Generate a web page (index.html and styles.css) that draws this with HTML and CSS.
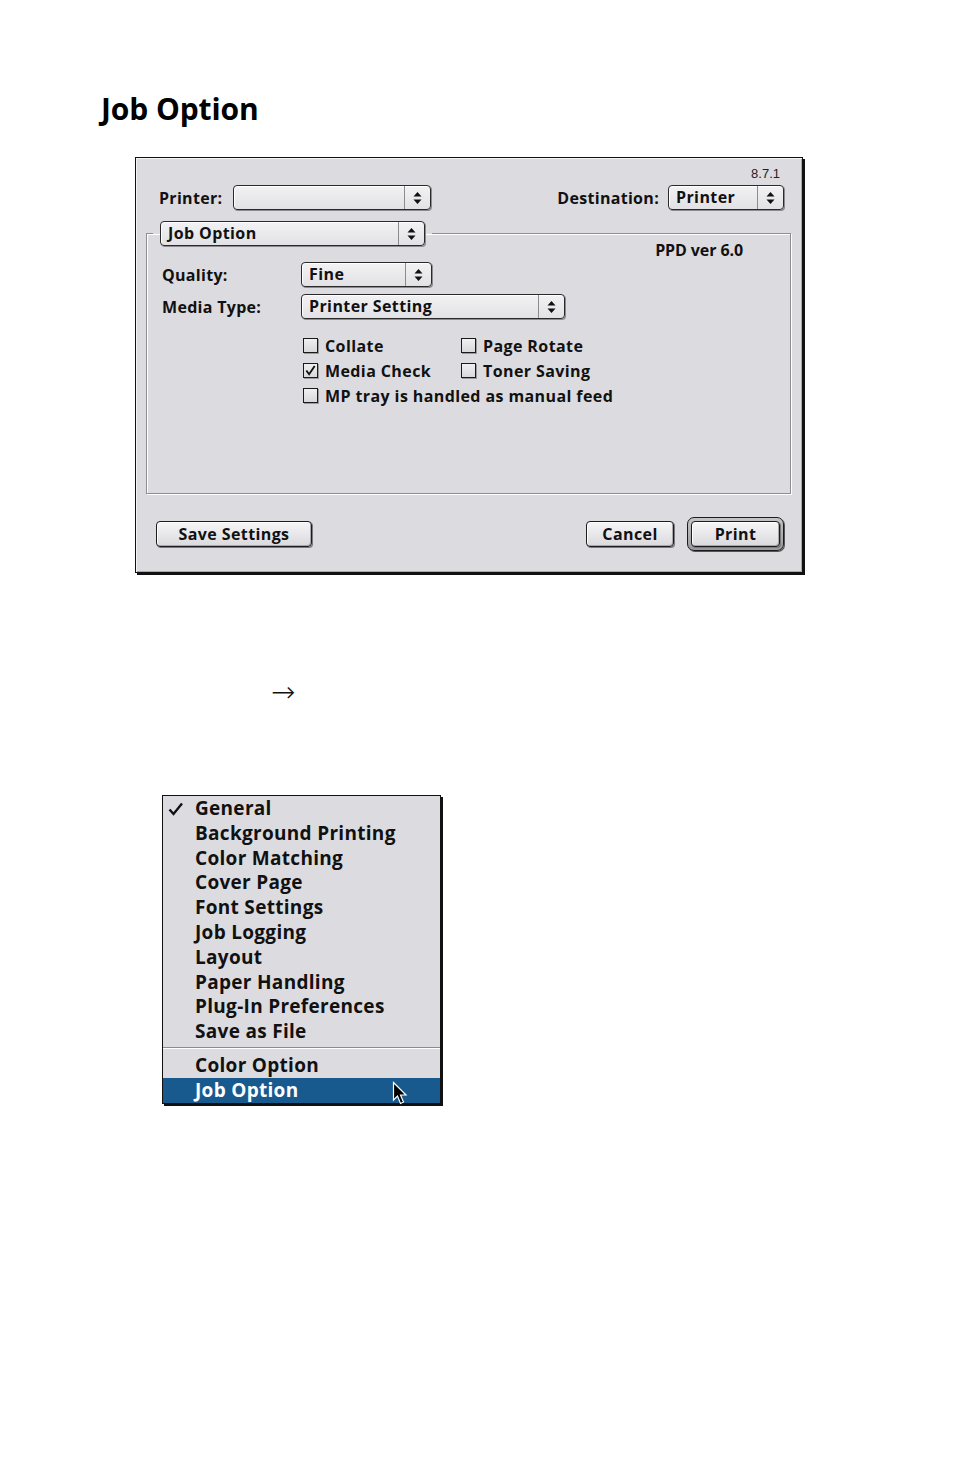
FILE: index.html
```html
<!DOCTYPE html>
<html>
<head>
<meta charset="utf-8">
<link rel="stylesheet" href="styles.css">
</head>
<body>
<h1 class="title">Job Option</h1>

<div class="dialog">
  <div class="version">8.7.1</div>
  <div class="top-row">
    <div class="field">
      <span class="label label-printer">Printer:</span>
      <div class="popup w-printer"><span class="popup-text"></span><span class="popup-arrow"><svg width="9" height="14" viewBox="0 0 9 14"><path d="M4.5 1 L8.5 5.5 L0.5 5.5 Z M4.5 13 L8.5 8.5 L0.5 8.5 Z" fill="#111"/></svg></span></div>
    </div>
    <div class="field">
      <span class="label">Destination:</span>
      <div class="popup w-dest"><span class="popup-text">Printer</span><span class="popup-arrow"><svg width="9" height="14" viewBox="0 0 9 14"><path d="M4.5 1 L8.5 5.5 L0.5 5.5 Z M4.5 13 L8.5 8.5 L0.5 8.5 Z" fill="#111"/></svg></span></div>
    </div>
  </div>

  <fieldset class="group">
    <legend class="group-legend">
      <div class="popup w-panel"><span class="popup-text">Job Option</span><span class="popup-arrow"><svg width="9" height="14" viewBox="0 0 9 14"><path d="M4.5 1 L8.5 5.5 L0.5 5.5 Z M4.5 13 L8.5 8.5 L0.5 8.5 Z" fill="#111"/></svg></span></div>
    </legend>
    <div class="group-body">
      <div class="ppd">PPD ver 6.0</div>
      <div class="opt-row">
        <span class="opt-label">Quality:</span>
        <div class="popup w-quality"><span class="popup-text">Fine</span><span class="popup-arrow"><svg width="9" height="14" viewBox="0 0 9 14"><path d="M4.5 1 L8.5 5.5 L0.5 5.5 Z M4.5 13 L8.5 8.5 L0.5 8.5 Z" fill="#111"/></svg></span></div>
      </div>
      <div class="opt-row second">
        <span class="opt-label">Media Type:</span>
        <div class="popup w-media"><span class="popup-text">Printer Setting</span><span class="popup-arrow"><svg width="9" height="14" viewBox="0 0 9 14"><path d="M4.5 1 L8.5 5.5 L0.5 5.5 Z M4.5 13 L8.5 8.5 L0.5 8.5 Z" fill="#111"/></svg></span></div>
      </div>
      <div class="checks">
        <div class="check-grid">
          <label class="check"><span class="box"></span>Collate</label>
          <label class="check"><span class="box"></span>Page Rotate</label>
          <label class="check"><span class="box"><svg width="14" height="14" viewBox="0 0 14 14"><path d="M2.5 6.5 L5.5 10.5 L11.5 1.5" fill="none" stroke="#111" stroke-width="2"/></svg></span>Media Check</label>
          <label class="check"><span class="box"></span>Toner Saving</label>
        </div>
        <label class="check"><span class="box"></span>MP tray is handled as manual feed</label>
      </div>
    </div>
  </fieldset>

  <div class="button-row">
    <div class="btn w-save">Save Settings</div>
    <div class="btn-group">
      <div class="btn w-cancel">Cancel</div>
      <div class="default-ring"><div class="btn w-print">Print</div></div>
    </div>
  </div>
</div>

<div class="arrow">&rarr;</div>

<div class="menu">
  <div class="menu-item"><svg class="mark" width="16" height="14" viewBox="0 0 16 14"><path d="M1.5 7.5 L5.5 12 L14 1.5" fill="none" stroke="#111" stroke-width="2.4"/></svg>General</div>
  <div class="menu-item">Background Printing</div>
  <div class="menu-item">Color Matching</div>
  <div class="menu-item">Cover Page</div>
  <div class="menu-item">Font Settings</div>
  <div class="menu-item">Job Logging</div>
  <div class="menu-item">Layout</div>
  <div class="menu-item">Paper Handling</div>
  <div class="menu-item">Plug-In Preferences</div>
  <div class="menu-item">Save as File</div>
  <div class="menu-sep"></div>
  <div class="menu-item tall">Color Option</div>
  <div class="menu-item tall selected">Job Option
    <svg class="cursor" width="18" height="26" viewBox="0 0 18 26"><path d="M1.5 1.5 L1.5 19 L5.5 15 L8.5 22.5 L11.5 21 L8.5 14 L14 14 Z" fill="#000" stroke="#fff" stroke-width="1.2" stroke-linejoin="miter"/></svg>
  </div>
</div>
</body>
</html>
```

FILE: styles.css
```css
html, body {
  margin: 0;
  padding: 0;
  background: #ffffff;
}

body {
  width: 954px;
  height: 1475px;
  font-family: "Open Sans", "DejaVu Sans", sans-serif;
  color: #111;
}

.title {
  margin: 0;
  padding: 89px 0 0 101px;
  height: 40px;
  font-family: "Open Sans", "DejaVu Sans", sans-serif;
  font-weight: 700;
  font-size: 30px;
  line-height: 40px;
  color: #000;
  letter-spacing: -0.1px;
}

/* ---------- dialog ---------- */
.dialog {
  margin: 28px 0 0 135px;
  width: 645px;
  padding: 9px 11px 21px 10px;
  background: #dcdce0;
  border: 1px solid #111;
  box-shadow: 2px 2px 0 #111, inset 1px 1px 0 #f4f4f6, inset -1px -1px 0 #a8a8ac;
  font-family: "Open Sans", "DejaVu Sans", sans-serif;
}

.version {
  height: 14px;
  line-height: 14px;
  font-family: "Liberation Sans", Arial, sans-serif;
  font-size: 13px;
  text-align: right;
  padding-right: 11px;
  color: #222;
}

.top-row {
  margin-top: 4px;
  height: 25px;
  display: flex;
  justify-content: space-between;
  padding: 0 7px 0 13px;
}

.field {
  display: flex;
  align-items: center;
}

.label {
  font-weight: 700;
  font-size: 16px;
  margin-right: 9px;
  letter-spacing: 0.3px;
}

.label-printer {
  width: 65px;
  margin-right: 9px;
}

/* popup (pull-down menu button) */
.popup {
  display: flex;
  height: 23px;
  border: 1px solid #2a2a2a;
  border-radius: 4px;
  background: linear-gradient(#f2f2f4, #e2e2e6);
  box-shadow: 1px 1px 0 #8c8c90, inset 1px 1px 0 #ffffff;
  box-sizing: content-box;
}

.popup-text {
  flex: 1;
  padding-left: 7px;
  font-weight: 700;
  font-size: 16px;
  line-height: 23px;
  white-space: nowrap;
  letter-spacing: 0.4px;
}

.popup-arrow {
  width: 25px;
  border-left: 1px solid #8c8c90;
  display: flex;
  align-items: center;
  justify-content: center;
}

.w-printer { width: 196px; }
.w-dest { width: 114px; }
.w-panel { width: 263px; }
.w-quality { width: 129px; }
.w-media { width: 262px; }

/* group box */
.group {
  margin: 11px 0 0 0;
  padding: 0 0 0 6px;
  border: 1px solid #8e8e92;
  box-shadow: 1px 1px 0 #ffffff, inset 1px 1px 0 #ffffff;
  min-width: 0;
}

.group-legend {
  padding: 0 7px;
  margin: 0;
}

.group-body {
  height: 251px;
  padding-left: 9px;
}

.ppd {
  margin-top: -4px;
  height: 16px;
  line-height: 16px;
  text-align: right;
  padding-right: 47px;
  font-weight: 700;
  font-size: 16px;
  letter-spacing: -0.1px;
}

.opt-row {
  margin-top: 4px;
  height: 25px;
  display: flex;
  align-items: center;
}

.opt-row.second {
  margin-top: 7px;
}

.opt-label {
  width: 139px;
  font-weight: 700;
  font-size: 16px;
  letter-spacing: 0.3px;
}

.checks {
  margin-top: 14px;
  padding-left: 141px;
  display: flex;
  flex-direction: column;
}

.check-grid {
  display: grid;
  grid-template-columns: 158px auto;
}

.check {
  height: 25px;
  display: flex;
  align-items: center;
  font-weight: 700;
  font-size: 16px;
  letter-spacing: 0.4px;
  white-space: nowrap;
}

.box {
  width: 13px;
  height: 13px;
  border: 1px solid #1a1a1a;
  background: linear-gradient(#f0f0f2, #d8d8dc);
  box-shadow: 1px 1px 0 #9a9a9e;
  margin-right: 7px;
  display: flex;
  align-items: center;
  justify-content: center;
  flex: none;
}

.box svg { display: block; }

/* buttons */
.button-row {
  margin-top: 23px;
  height: 34px;
  display: flex;
  align-items: center;
  justify-content: space-between;
  padding: 0 7px 0 10px;
}

.btn-group {
  display: flex;
  align-items: center;
  gap: 13px;
}

.btn {
  height: 24px;
  line-height: 24px;
  border: 1px solid #1c1c1c;
  border-radius: 4px;
  background: linear-gradient(#f6f6f8, #dadade);
  box-shadow: 1px 1px 0 #7a7a7e, inset -1px -1px 0 #a8a8ac, inset 1px 1px 0 #ffffff;
  text-align: center;
  font-weight: 700;
  font-size: 16px;
  letter-spacing: 0.4px;
}

.w-save { width: 154px; }
.w-cancel { width: 86px; }
.w-print { width: 87px; }

.default-ring {
  padding: 3px;
  border: 1px solid #1c1c1c;
  border-radius: 7px;
  background: linear-gradient(#c4c4c8, #9a9a9e);
  box-shadow: 1px 1px 0 #555;
}

/* arrow */
.arrow {
  margin: 104px 0 0 271px;
  height: 30px;
  line-height: 30px;
  font-family: "DejaVu Sans", sans-serif;
  font-size: 29px;
  font-weight: 300;
  color: #111;
}

/* menu */
.menu {
  margin: 88px 0 0 162px;
  width: 277px;
  background: #dcdce0;
  border: 1px solid #111;
  box-shadow: 2px 2px 0 #111;
}

.menu-item {
  position: relative;
  height: 24.8px;
  line-height: 24.8px;
  padding-left: 32px;
  font-weight: 700;
  font-size: 19px;
  letter-spacing: 0.3px;
  color: #111;
  white-space: nowrap;
}

.menu-item.tall {
  height: 25px;
  line-height: 25px;
}

.mark {
  position: absolute;
  left: 5px;
  top: 6px;
}

.menu-sep {
  height: 9px;
  background: linear-gradient(#dcdce0 0, #dcdce0 3px, #8c8c90 3px, #8c8c90 4px, #ffffff 4px, #ffffff 5px, #dcdce0 5px);
}

.menu-item.selected {
  background: #185a8e;
  color: #ffffff;
}

.cursor {
  position: absolute;
  left: 229px;
  top: 3px;
}
```
